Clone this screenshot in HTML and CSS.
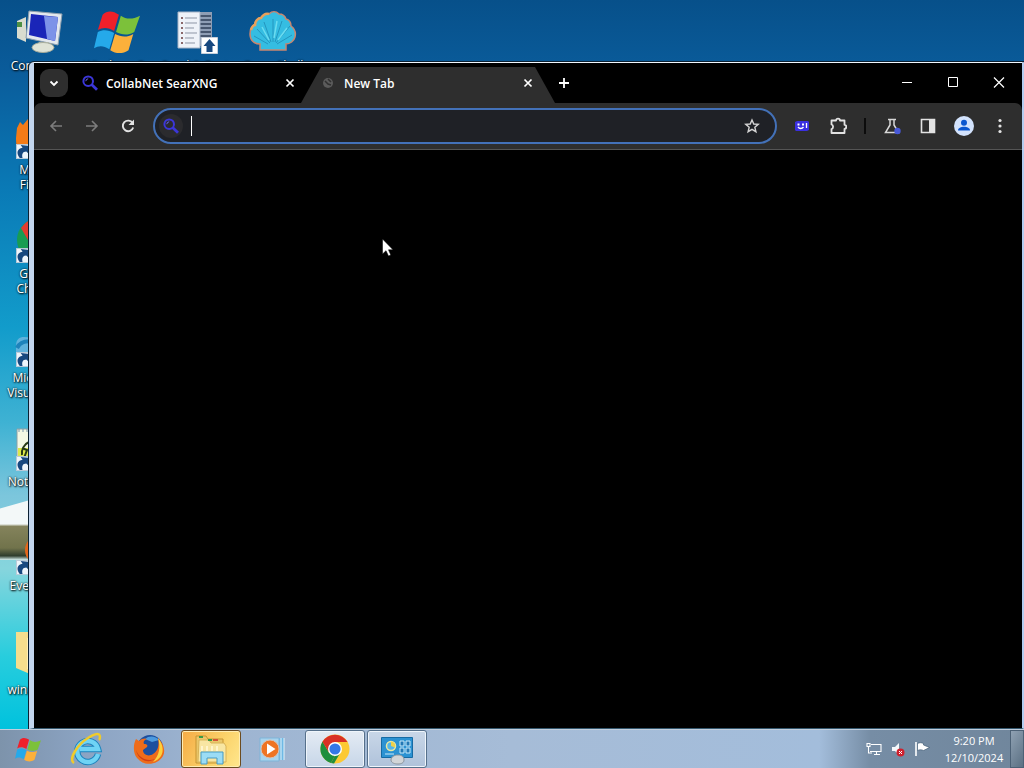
FILE: index.html
```html
<!DOCTYPE html>
<html lang="en">
    <head>
        <meta charset="utf-8">
        <title>Desktop</title>
        <link rel="stylesheet" href="styles.css">
    </head>
    <body>
        <svg class="defs" width="0" height="0" aria-hidden="true">
            <symbol id="arrow" viewBox="0 0 16 16">
                <rect x=".5" y=".5" width="15" height="15" fill="#eef5fb" stroke="#b9c9d8"/>
                <path d="M4 15C0 10 1 5 7 4L5 1l10 1-1 9-3-3c-4 0-5 3-4 7z" fill="#17487f"/>
            </symbol>
            <symbol id="flag" viewBox="0 0 48 48">
                <path d="M9 7c5-5 11-4 17 0l-5 17c-6-4-12-4-17-1z" fill="#f0202a"/>
                <path d="M28 8c6 4 12 4 20 0l-6 17c-7 4-13 3-19 0z" fill="#7cc13a"/>
                <path d="M4 25c6-3 11-2 17 1l-5 17c-6-4-11-4-16-1z" fill="#25a9ea"/>
                <path d="M22 27c6 3 12 4 19 0l-5 17c-6 4-13 4-19 0z" fill="#fbb03b"/>
            </symbol>
            <symbol id="lens" viewBox="0 0 16 16">
                <circle cx="6.2" cy="6.2" r="4.8" fill="none" stroke="#3b36d8" stroke-width="2"/>
                <path d="M3.8 6.2a2.5 2.5 0 0 1 2.4-2.4" fill="none" stroke="#6a66ee"/>
                <path d="M9.6 9.6L15 14.8" stroke="#3b36d8" stroke-width="2.8"/>
            </symbol>
            <symbol id="cross" viewBox="0 0 16 16">
                <path d="M4.5 4.5l7 7M11.5 4.5l-7 7" stroke="#fff" stroke-width="1.7"/>
            </symbol>
        </svg>

        <main class="desktop">
            <div class="hill"></div>
            <div class="icons">
                <a href="#" class="icon c1 r1">
                    <svg viewBox="0 0 48 48">
                        <path d="M2 13l9-4v25l-9-4z" fill="#d9dccf"/><path d="M2 14h5v5H2z" fill="#4d8f42"/>
                        <path d="M14 3l33 3-4 31-32-7z" fill="#e3e8ee" stroke="#8fa0ae"/>
                        <path d="M16 6l27 3-3 24-26-6z" fill="#1a25b8"/><path d="M29 8l14 1-3 24-8-2z" fill="#7d93e8"/>
                        <path d="M24 34h10v5H24z" fill="#b8bfb5"/><ellipse cx="28" cy="39.500" rx="11" ry="5" fill="#dfe3d6" stroke="#a5ab9b"/>
                    </svg>
                    <span>Computer</span>
                </a>
                <a href="#" class="icon c2 r1">
                    <svg viewBox="0 0 48 48"><use href="#flag" width="48" height="46"/></svg>
                    <span>Windows Se</span>
                </a>
                <a href="#" class="icon c3 r1">
                    <svg viewBox="0 0 48 48">
                        <path d="M15 4h26v34H15z" fill="#8e9db4"/>
                        <path d="M27 8h13M27 12h13M27 16h13M27 20h13M27 24h13M27 28h13" stroke="#47566e" stroke-width="2"/>
                        <path d="M7 4h22v36H7z" fill="#eef2f8" stroke="#a7b4c6"/>
                        <path d="M14 10h12M14 15h12M14 20h9M14 25h12M14 30h9M14 35h10" stroke="#8d95a5"/>
                        <path d="M10 10h2M10 15h2M10 20h2M10 25h2M10 30h2M10 35h2" stroke="#6b3c3c" stroke-width="1.500"/>
                        <path d="M30.500 29.500h16v16h-16z" fill="#fff" stroke="#c6cfdb"/>
                        <path d="M38.500 31l6 7h-3v6h-6v-6h-3z" fill="#17487f"/>
                    </svg>
                    <span>Send &amp; Rest</span>
                </a>
                <a href="#" class="icon c4 r1">
                    <svg viewBox="0 0 48 48">
                        <path d="M11 42v-6C5 36 1 32 1 26c0-5 2-8 5-9 0-4 3-7 6-7 2-3 5-5 8-4 3-3 7-3 10 0 4 0 6 2 7 5 4 1 5 4 5 7 4 3 5 7 4 11-1 4-5 7-9 7v6z" fill="#35bde2" stroke="#c98770" stroke-width="1.500"/>
                        <path d="M2 22c1-3 2-5 4-5 0-4 3-7 6-7 2-3 5-5 8-4" fill="none" stroke="#e9a15b" stroke-width="2.500"/>
                        <path d="M21 35L8 21M22 34L15 14M24 34V11M26 34l7-21M27 35l14-17M28 36l15-9M19 36L5 28" stroke="#2496bf"/>
                        <path d="M20 32L13 19M25 30l3-17M29 32l9-12" stroke="#6bdcf0" stroke-width="1.500"/>
                    </svg>
                    <span>Open Shell</span>
                </a>
                <a href="#" class="icon c1 r2">
                    <svg viewBox="0 0 48 48">
                        <circle cx="25" cy="24" r="16" fill="#2d6bb5"/>
                        <path d="M2 16l3-6 3 3 5-6 2 8 10 4-4 26H8C2 40 1 33 1 26z" fill="#f47b17"/>
                        <use href="#arrow" x="1" y="32" width="15" height="15"/>
                    </svg>
                    <span>Mozilla Firefox</span>
                </a>
                <a href="#" class="icon c1 r3">
                    <svg viewBox="0 0 48 48">
                        <circle cx="24" cy="24" r="22" fill="#179c52"/><path d="M6 12A22 22 0 0 1 45 15L24 24H13z" fill="#e33b2e"/>
                        <circle cx="24" cy="24" r="9" fill="#3a7be8" stroke="#fff" stroke-width="2"/>
                        <use href="#arrow" x="1" y="32" width="15" height="15"/>
                    </svg>
                    <span>Google Chrome</span>
                </a>
                <a href="#" class="icon c1 r4">
                    <svg viewBox="0 0 48 48">
                        <path d="M1 26C1 16 8 16 16 18h22v22H1z" fill="#5fb2dc"/><path d="M2 28c3-6 8-8 18-6" fill="none" stroke="#1e83bb" stroke-width="4"/>
                        <use href="#arrow" x="1" y="32" width="15" height="15"/>
                    </svg>
                    <span>Microsoft Visual Stu...</span>
                </a>
                <a href="#" class="icon c1 r5">
                    <svg viewBox="0 0 48 48">
                        <path d="M2 5h38v40H2z" fill="#f4f8e4" stroke="#8da0a5"/><path d="M3 24h30v12H3z" fill="#dce84a"/>
                        <path d="M4 5v3M8 5v3M12 5v3M16 5v3" stroke="#7b98ad"/>
                        <path d="M14 18c-5 2-8 8-7 13M7 24l5 2-3 8" fill="none" stroke="#283a16" stroke-width="2"/>
                        <use href="#arrow" x="1" y="32" width="15" height="15"/>
                    </svg>
                    <span>Notepad++</span>
                </a>
                <a href="#" class="icon c1 r6">
                    <svg viewBox="0 0 48 48">
                        <circle cx="25" cy="22" r="13" fill="none" stroke="#e4671b" stroke-width="4"/>
                        <use href="#arrow" x="1" y="32" width="15" height="15"/>
                    </svg>
                    <span>Everything</span>
                </a>
                <a href="#" class="icon c1 r7">
                    <svg viewBox="0 0 48 48">
                        <path d="M1 0h20l3 4h20v38H15L1 36z" fill="#f5de8d"/><path d="M12 6h5v33l-5-2z" fill="#ffefb5"/>
                    </svg>
                    <span>windows10</span>
                </a>
            </div>

            <section class="window" aria-label="Browser">
                <header class="tabs">
                    <button class="tab-search" aria-label="Search tabs">
                        <svg width="16" height="16" viewBox="0 0 16 16"><path d="M4.500 6.500L8 10l3.500-3.500" fill="none" stroke="#fff" stroke-width="1.800"/></svg>
                    </button>
                    <div class="tab">
                        <svg width="16" height="16"><use href="#lens"/></svg>
                        <span>CollabNet SearXNG</span>
                        <button aria-label="Close tab"><svg width="16" height="16"><use href="#cross"/></svg></button>
                    </div>
                    <div class="tab active">
                        <svg width="16" height="16" viewBox="0 0 16 16"><circle cx="8" cy="8" r="5" fill="#5b5b5b"/><path d="M5 6l3 3 3 1M8 4l3 3" stroke="#303030" stroke-width="1.500" fill="none"/></svg>
                        <span>New Tab</span>
                        <button aria-label="Close tab"><svg width="16" height="16"><use href="#cross"/></svg></button>
                    </div>
                    <button class="new-tab" aria-label="New tab">
                        <svg width="18" height="18" viewBox="0 0 18 18"><path d="M9 4v10M4 9h10" stroke="#fff" stroke-width="1.800"/></svg>
                    </button>
                    <div class="controls">
                        <button aria-label="Minimize"><svg width="12" height="12" viewBox="0 0 12 12"><path d="M1 5.500h10" stroke="#fff"/></svg></button>
                        <button aria-label="Maximize"><svg width="12" height="12" viewBox="0 0 12 12"><path d="M1.500 .500h9v9h-9z" fill="none" stroke="#fff"/></svg></button>
                        <button aria-label="Close"><svg width="12" height="12" viewBox="0 0 12 12"><path d="M1 .500l10 10M11 .500l-10 10" stroke="#fff" stroke-width="1.200"/></svg></button>
                    </div>
                </header>
                <nav class="toolbar">
                    <button aria-label="Back"><svg width="16" height="16" viewBox="0 0 16 16"><path d="M14 8H3M8 3L3 8l5 5" fill="none" stroke="#7c7c7c" stroke-width="1.600"/></svg></button>
                    <button aria-label="Forward"><svg width="16" height="16" viewBox="0 0 16 16"><path d="M2 8h11M8 3l5 5-5 5" fill="none" stroke="#7c7c7c" stroke-width="1.600"/></svg></button>
                    <button aria-label="Reload"><svg width="16" height="16" viewBox="0 0 16 16"><path d="M12.600 5A5.300 5.300 0 1 0 13.200 9.500" fill="none" stroke="#e3e3e3" stroke-width="1.900"/><path d="M14 1.500V7H8.500z" fill="#e3e3e3"/></svg></button>
                    <label class="omnibox">
                        <span class="engine"><svg width="16" height="16"><use href="#lens"/></svg></span>
                        <i class="caret"></i>
                        <input type="text" aria-label="Address and search bar">
                        <button aria-label="Bookmark this tab"><svg width="16" height="16" viewBox="0 0 18 18"><path d="M9 2.200l2 4.600 5 .4-3.800 3.300 1.200 4.900L9 12.800l-4.400 2.600 1.200-4.900L2 7.200l5-.4z" fill="none" stroke="#d4d4d4" stroke-width="1.600"/></svg></button>
                    </label>
                    <button aria-label="Extension">
                        <svg width="16" height="16" viewBox="0 0 16 16"><path d="M1 4l2-1h11l1 1v8l-2 1H2l-1-1z" fill="#3a2fe0"/><path d="M3.500 5.500h2v2h-2zM8 5.500h2v2H8z" fill="#fff"/><path d="M4 9c1.500 2 4 2 5.500 0M12.500 5v5" stroke="#fff" stroke-width="1.300" fill="none"/></svg>
                    </button>
                    <button aria-label="Extensions">
                        <svg width="18" height="18" viewBox="0 0 18 18"><path d="M2.500 3.500H7a2 1.800 0 0 1 4 0h4.500v4.300a1.800 2 0 0 1 0 4v4.200h-13v-4a2 2.300 0 0 0 0-4.500z" fill="none" stroke="#e3e3e3" stroke-width="1.800" stroke-linejoin="round"/></svg>
                    </button>
                    <span class="separator"></span>
                    <button aria-label="Experiments">
                        <svg width="18" height="18" viewBox="0 0 18 18"><path d="M5 2.500h8M7 3v5l-4.500 7.500h13L11 8V3" fill="none" stroke="#d8d8d8" stroke-width="1.500"/><circle cx="14.500" cy="14" r="3.200" fill="#4859d8"/></svg>
                    </button>
                    <button aria-label="Side panel">
                        <svg width="16" height="16" viewBox="0 0 16 16"><path d="M1.500 1.500h13v13h-13z" fill="none" stroke="#e3e3e3" stroke-width="1.600"/><path d="M9 2h5v12H9z" fill="#e3e3e3"/></svg>
                    </button>
                    <button aria-label="Profile">
                        <svg width="20" height="20" viewBox="0 0 20 20"><circle cx="10" cy="10" r="10" fill="#d3e3fd"/><circle cx="10" cy="6.800" r="3" fill="#0b57d0"/><path d="M4 14.500c0-5 12-5 12 0z" fill="#0b57d0"/></svg>
                    </button>
                    <button aria-label="Menu">
                        <svg width="16" height="16" viewBox="0 0 16 16"><circle cx="8" cy="2.500" r="1.600" fill="#e3e3e3"/><circle cx="8" cy="8" r="1.600" fill="#e3e3e3"/><circle cx="8" cy="13.500" r="1.600" fill="#e3e3e3"/></svg>
                    </button>
                </nav>
                <div class="page"></div>
            </section>
        </main>

        <footer class="taskbar">
            <button class="start" aria-label="Start"><svg width="26" height="26"><use href="#flag"/></svg></button>
            <button aria-label="Internet Explorer">
                <svg width="34" height="34" viewBox="0 0 34 34">
                    <path d="M28 22A10.500 10.500 0 1 1 28 17H10" fill="none" stroke="#1c83bd" stroke-width="6.500"/>
                    <path d="M28 22A10.500 10.500 0 1 1 28 17H10" fill="none" stroke="#6fd3f5" stroke-width="4.500"/>
                    <path d="M4 31C-2 27 8 12 18 6c6-4 12-6 12-1 0 1 0 2-1 3" fill="none" stroke="#f0cb2c" stroke-width="2.500"/>
                </svg>
            </button>
            <button aria-label="Firefox">
                <svg width="32" height="32" viewBox="0 0 32 32">
                    <circle cx="17" cy="15" r="13" fill="#1d4f9e"/><path d="M12 6c4-4 11-3 14 1l-7 2z" fill="#4d9ade"/>
                    <path d="M3 6l3 2c3-3 6-3 8-2-3 1-4 3-3 5 3 0 4 1 3 3l-4 3c0 5 6 7 10 4 6-4 6-10 5-16 5 5 8 12 5 18-5 9-19 11-26 2C0 21 0 11 3 6z" fill="#ee6c1a"/>
                    <path d="M25 5c5 6 6 13 3 18-2 3-5 5-8 6 6-6 8-15 5-24z" fill="#fbd13e"/>
                    <path d="M3 17c3 8 11 12 19 9-7 5-17 1-19-9z" fill="#cf3d16"/>
                </svg>
            </button>
            <button class="running alert" aria-label="Windows Explorer">
                <svg width="34" height="34" viewBox="0 0 34 34">
                    <path d="M2 4h10l2 3h15v24H2z" fill="#eac76a" stroke="#c79532"/><path d="M5 8h10l2 3h13l2 3v16H4z" fill="#f8e6a3" stroke="#d9b458"/>
                    <path d="M5 5h4M14 8h4" stroke="#3a9b45" stroke-width="2"/><path d="M19 8h5" stroke="#d45538" stroke-width="2"/>
                    <path d="M8 14v5M13 14v5M18 14v5M23 14v5" stroke="#fff5cb" stroke-width="2"/>
                    <path d="M7 32V20h22v12h-6v-6H13v6z" fill="#9bdcf5" stroke="#479bc5"/>
                </svg>
            </button>
            <button aria-label="Windows Media Player">
                <svg width="30" height="30" viewBox="0 0 30 30">
                    <path d="M10 4h16v22H10z" fill="#6fb8e4"/><path d="M23 4v22M26 4v22" stroke="#e3f3fb"/><path d="M2 4h19v23H2z" fill="#a8d4ee" stroke="#7eb4d8"/>
                    <circle cx="12" cy="15" r="9" fill="#ee7424" stroke="#d9c1b4"/><path d="M9 9.500l8.500 5.500L9 20.500z" fill="#fff"/>
                </svg>
            </button>
            <button class="running" aria-label="Google Chrome">
                <svg width="30" height="30" viewBox="0 0 30 30">
                    <circle cx="15" cy="15" r="14.500" fill="#fcc934"/>
                    <path d="M2.500 7.500L9 18.500l6 3-4 7.500A14.500 14.500 0 0 1 2.500 7.500z" fill="#1e8e3e"/><path d="M15 21.500l5.600-3.200L14 29.500l-3-.500z" fill="#1e8e3e"/>
                    <path d="M2.500 7.700a14.500 14.500 0 0 1 25 .300H15L9 18.500z" fill="#d93025"/>
                    <circle cx="15" cy="15" r="7" fill="#fff"/><circle cx="15" cy="15" r="5.600" fill="#3478e8"/>
                </svg>
            </button>
            <button class="running" aria-label="Control Panel">
                <svg width="34" height="32" viewBox="0 0 34 32">
                    <path d="M1.500 4.500h31v20h-31z" fill="#2c92d2" stroke="#166ba4"/>
                    <circle cx="11" cy="13" r="4.500" fill="#53b6e9" stroke="#e9e8a3" stroke-width="1.500"/><path d="M11 8.500a4.500 4.500 0 0 1 4 6l-4-1.500z" fill="#eed14a"/>
                    <path d="M20 8h4v5h-4zM26 8h4v5h-4zM20 15h4v5h-4zM26 15h4v5h-4z" fill="#2278b5" stroke="#c7eafb"/>
                    <path d="M5 21h9" stroke="#c7eafb"/><path d="M11 27c0-3 3-5 7-5s6 2 6 5-3 4-6 4-7-1-7-4z" fill="#d2d5d8" stroke="#8c959d"/>
                </svg>
            </button>
            <div class="tray">
                <button aria-label="Network"><svg width="16" height="16" viewBox="0 0 16 16"><path d="M5 3.500h10v7H4M8 13.500h6M10.500 11v2M1 2.500h3v3H1zM2.500 6v6H6" fill="none" stroke="#fff" stroke-width="1.100"/></svg></button>
                <button aria-label="Volume"><svg width="16" height="16" viewBox="0 0 16 16"><path d="M2 6h3l4-4v12l-4-4H2z" fill="#f4f7fa"/><circle cx="10.500" cy="11.500" r="4" fill="#cf202d"/><path d="M9 10l3 3M12 10l-3 3" stroke="#fff"/></svg></button>
                <button aria-label="Action Center"><svg width="16" height="16" viewBox="0 0 16 16"><path d="M2 1v14" stroke="#fff" stroke-width="1.600"/><path d="M3.500 2.500c2-1 4-1 6 0v1.500l6 2.500-6 3c-2-1-4-1-6 0z" fill="#fff" stroke="#34516b" stroke-width=".600"/></svg></button>
                <time class="clock">9:20 PM<br>12/10/2024</time>
                <button class="peek" aria-label="Show desktop"></button>
            </div>
        </footer>
        <svg class="pointer" width="12" height="19" viewBox="0 0 12 19"><path d="M.500 0v15l3.500-3.300L6.500 17l2.300-1-2.300-5.200H11z" fill="#fff" stroke="#000" stroke-width=".500"/></svg>
    </body>
</html>
```

FILE: styles.css
```css
*{
    box-sizing: border-box;
}
body{
    margin: 0;
    height: 100vh;
    display: flex;
    flex-direction: column;
    overflow: hidden;
    font-family: "Open Sans", "Noto Sans", sans-serif;
    font-size: 12px;
    color: white;
}
button{
    padding: 0;
    border: none;
    background: none;
    display: flex;
    align-items: center;
    justify-content: center;
}
svg{
    flex: none;
}
.defs{
    position: absolute;
}

/* desktop */
.desktop{
    flex: 1;
    position: relative;
    overflow: hidden;
    background: linear-gradient(#07508a, #0a5c9b 10%, #0a7ab6 26%, #129ccb 45%, #3fb2d3 58%, #7cc6dc 68%, #86d5dd 78%, #28cddd 90%, #00c2dd);
}
.hill{
    position: absolute;
    left: 0;
    top: 500px;
    width: 60px;
    height: 60px;
    background: linear-gradient(#f3f8f8 40%, #84835c 44%, #71734b 80%, #2e3c2c 93%, #d8f3f2);
    clip-path: polygon(0 14%, 50% 0, 100% 0, 100% 100%, 0 100%);
}
.icons{
    position: absolute;
    left: 0;
    top: 0;
    display: grid;
    grid-template-columns: repeat(4, 78px);
    grid-template-rows: repeat(7, 104px);
}
.icon{
    display: flex;
    flex-direction: column;
    align-items: center;
    gap: 2px;
    padding-top: 8px;
    color: white;
    text-decoration: none;
    text-align: center;
    line-height: 15px;
    text-shadow: 1px 1px 2px black, 0 0 2px black;
}
.icon svg{
    width: 48px;
    height: 48px;
}
.icon span{
    width: 70px;
}
.c1{ grid-column: 1; }
.c2{ grid-column: 2; }
.c3{ grid-column: 3; }
.c4{ grid-column: 4; }
.r1{ grid-row: 1; }
.r2{ grid-row: 2; }
.r3{ grid-row: 3; }
.r4{ grid-row: 4; }
.r5{ grid-row: 5; }
.r6{ grid-row: 6; }
.r7{ grid-row: 7; }

/* browser window */
.window{
    position: absolute;
    left: 29px;
    top: 62px;
    right: 0;
    bottom: 0;
    display: flex;
    flex-direction: column;
    background: black;
    border-style: solid;
    border-width: 1px 2px 1px 5px;
    border-color: #f2f8ff #b4cdf0 #35586e #c3d6ee;
    border-radius: 5px 0 0 0;
    box-shadow: 0 0 0 1px #0c2133;
}
.tabs{
    display: flex;
    align-items: flex-end;
    height: 40px;
    padding-left: 6px;
}
.tab-search{
    width: 28px;
    height: 28px;
    margin-bottom: 6px;
    border-radius: 9px;
    background: #2e2e2e;
}
.tab{
    display: flex;
    align-items: center;
    gap: 8px;
    width: 233px;
    height: 36px;
    padding: 0 3px 4px 14px;
    font-weight: 600;
}
.tab span{
    flex: 1;
}
.tab.active{
    width: 254px;
    padding: 0 19px 4px 19px;
    background: #2e2e2e;
    clip-path: polygon(20px 0, 234px 0, 100% 100%, 0 100%);
}
.new-tab{
    width: 18px;
    height: 40px;
}
.controls{
    display: flex;
    margin-left: auto;
}
.controls button{
    width: 46px;
    height: 40px;
}
.toolbar{
    display: flex;
    align-items: center;
    gap: 8px;
    height: 47px;
    padding: 0 8px;
    background: #2e2e2e;
    border-bottom: 1px solid #555;
    border-radius: 7px 7px 0 0;
}
.toolbar button{
    width: 28px;
    height: 28px;
}
.omnibox{
    flex: 1;
    display: flex;
    align-items: center;
    height: 36px;
    margin: 0 3px;
    padding: 0 9px 0 4px;
    background: #1f2126;
    border: 2px solid #4371b8;
    border-radius: 18px;
}
.engine{
    display: flex;
    align-items: center;
    justify-content: center;
    width: 24px;
    height: 24px;
    border-radius: 12px;
    background: #2b2b2e;
}
.caret{
    width: 1px;
    height: 20px;
    margin-left: 8px;
    background: white;
}
.omnibox input{
    flex: 1;
    min-width: 0;
    border: none;
    outline: none;
    background: none;
    color: white;
    font: inherit;
}
.separator{
    width: 2px;
    height: 16px;
    margin: 0 4px;
    background: #0c0c0c;
}
.page{
    flex: 1;
}

/* taskbar */
.taskbar{
    display: flex;
    gap: 2px;
    height: 39px;
    border-top: 1px solid #c0cedd;
    background: linear-gradient(90deg, #7d93ab, #8ba3c2 8%, #9db4d1 20%, #a6bcd7 50%, #a3bddb 80%, #768da5 85%, #70869c);
}
.taskbar > button{
    width: 60px;
    border-radius: 3px;
}
.taskbar .start{
    width: 55px;
}
.taskbar .running{
    border: 1px solid #56708b;
    background: linear-gradient(#e4ebf4, #c7d6e8);
    box-shadow: inset 0 0 0 1px #eff5fb;
}
.taskbar .running:last-of-type{
    background: linear-gradient(#c9d7e8, #afc2da);
}
.taskbar .alert{
    border-color: #6c4c20;
    background: linear-gradient(120deg, #f5ab45, #fbd36b 60%, #ffe78d);
    box-shadow: inset 0 0 0 1px #ffedb2;
}
.tray{
    display: flex;
    align-items: center;
    gap: 8px;
    margin-left: auto;
}
.clock{
    width: 72px;
    text-align: center;
    font-size: 11px;
    line-height: 17px;
}
.tray .peek{
    width: 14px;
    height: 38px;
    margin-left: -8px;
    border: 1px solid #4c6176;
    background: linear-gradient(120deg, #8fa1b3, #5b7083);
}

/* mouse pointer */
.pointer{
    position: absolute;
    left: 382px;
    top: 239px;
}
```
